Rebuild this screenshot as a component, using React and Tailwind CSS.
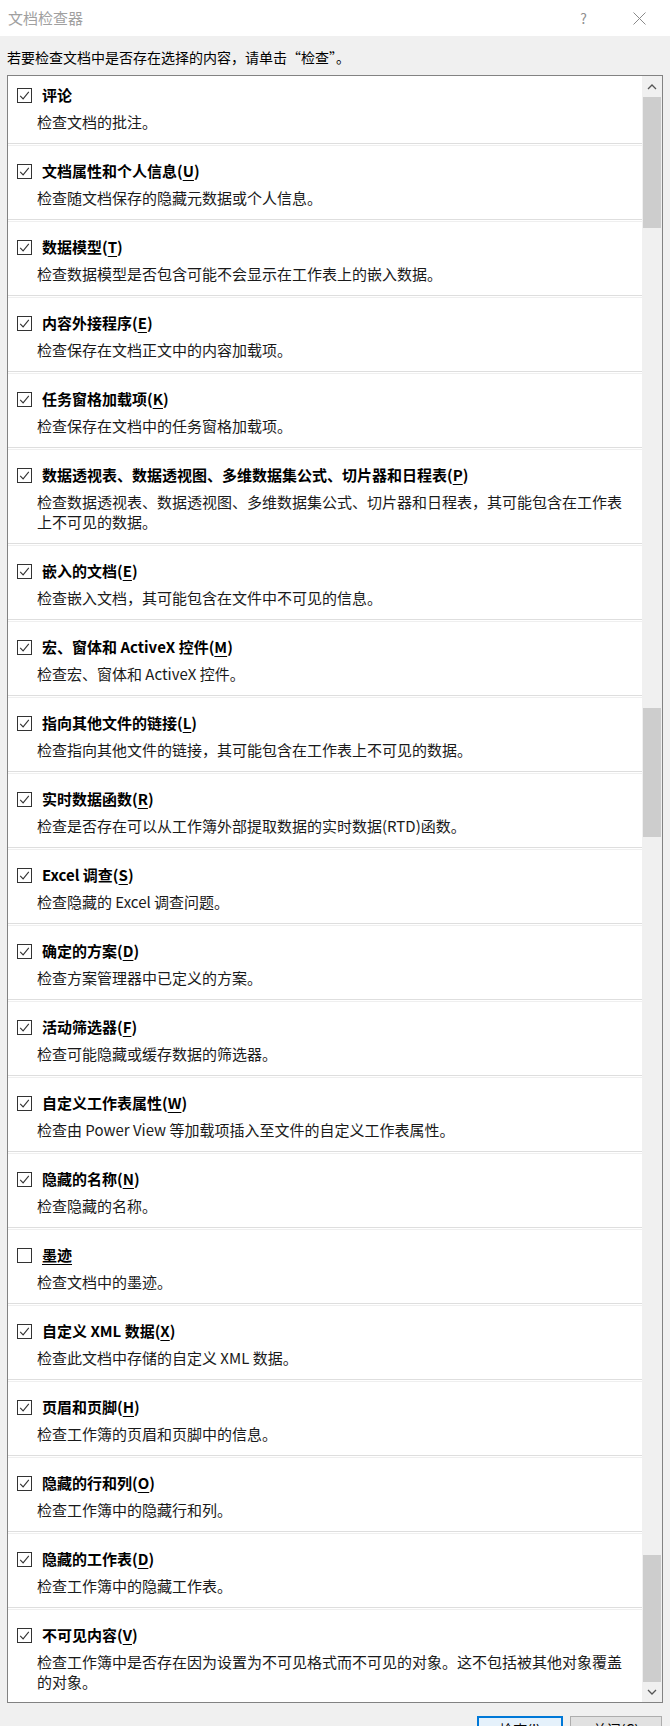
import React from "react"

const items = [
  { title: "评论", desc: "检查文档的批注。" },
  { title: "文档属性和个人信息", key: "U", desc: "检查随文档保存的隐藏元数据或个人信息。" },
  { title: "数据模型", key: "T", desc: "检查数据模型是否包含可能不会显示在工作表上的嵌入数据。" },
  { title: "内容外接程序", key: "E", desc: "检查保存在文档正文中的内容加载项。" },
  { title: "任务窗格加载项", key: "K", desc: "检查保存在文档中的任务窗格加载项。" },
  { title: "数据透视表、数据透视图、多维数据集公式、切片器和日程表", key: "P", desc: "检查数据透视表、数据透视图、多维数据集公式、切片器和日程表，其可能包含在工作表上不可见的数据。" },
  { title: "嵌入的文档", key: "E", desc: "检查嵌入文档，其可能包含在文件中不可见的信息。" },
  { title: "宏、窗体和 ActiveX 控件", key: "M", desc: "检查宏、窗体和 ActiveX 控件。" },
  { title: "指向其他文件的链接", key: "L", desc: "检查指向其他文件的链接，其可能包含在工作表上不可见的数据。" },
  { title: "实时数据函数", key: "R", desc: "检查是否存在可以从工作簿外部提取数据的实时数据(RTD)函数。" },
  { title: "Excel 调查", key: "S", desc: "检查隐藏的 Excel 调查问题。" },
  { title: "确定的方案", key: "D", desc: "检查方案管理器中已定义的方案。" },
  { title: "活动筛选器", key: "F", desc: "检查可能隐藏或缓存数据的筛选器。" },
  { title: "自定义工作表属性", key: "W", desc: "检查由 Power View 等加载项插入至文件的自定义工作表属性。" },
  { title: "隐藏的名称", key: "N", desc: "检查隐藏的名称。" },
  { title: "墨迹", unchecked: true, underline: true, desc: "检查文档中的墨迹。" },
  { title: "自定义 XML 数据", key: "X", desc: "检查此文档中存储的自定义 XML 数据。" },
  { title: "页眉和页脚", key: "H", desc: "检查工作簿的页眉和页脚中的信息。" },
  { title: "隐藏的行和列", key: "O", desc: "检查工作簿中的隐藏行和列。" },
  { title: "隐藏的工作表", key: "D", desc: "检查工作簿中的隐藏工作表。" },
  { title: "不可见内容", key: "V", desc: "检查工作簿中是否存在因为设置为不可见格式而不可见的对象。这不包括被其他对象覆盖的对象。" },
]

function CheckBox({ checked }) {
  return (
    <svg width="15" height="15" viewBox="0 0 15 15" className="flex-shrink-0">
      <rect x="0.5" y="0.5" width="14" height="14" fill="#fff" stroke="#333" />
      {checked && <path d="M3.2 7.8 L6.1 10.9 L11.8 3.8" fill="none" stroke="#333" strokeWidth="1.1" />}
    </svg>
  )
}

function Row({ item, first, last }) {
  return (
    <div>
      <div className={`${first ? "pt-[8px]" : "pt-[14px]"} ${last ? "pb-[10px]" : "pb-[11px]"}`}>
        <div className="flex items-center h-[22px] pl-[9px] gap-[10px]">
          <CheckBox checked={!item.unchecked} />
          <span className={`text-[15px] font-bold text-black leading-[22px] whitespace-nowrap ${item.underline ? "underline underline-offset-[3px]" : ""}`}>
            {item.title}
            {item.key && (
              <>
                (<span className="underline underline-offset-[3px]">{item.key}</span>)
              </>
            )}
          </span>
        </div>
        <p className="mt-[6px] pl-[29px] max-w-[622px] text-[15px] leading-[20px] text-[#1a1a1a]">
          {item.desc}
        </p>
      </div>
      {!last && (
        <div>
          <div className="h-[1px] bg-[#dedede]" />
          <div className="h-[1px] bg-white" />
          <div className="h-[1px] bg-[#efefef]" />
        </div>
      )}
    </div>
  )
}

function ScrollBar() {
  return (
    <div className="w-[20px] flex-shrink-0 flex flex-col bg-[#f0f0f0]">
      <div className="h-[21px] flex items-center justify-center">
        <svg width="10" height="6" viewBox="0 0 10 6">
          <path d="M1 5 L5 1 L9 5" fill="none" stroke="#555" strokeWidth="1.3" />
        </svg>
      </div>
      <div className="h-[131px] mx-[1px] bg-[#cdcdcd]" />
      <div className="h-[480px]" />
      <div className="h-[129px] mx-[1px] bg-[#cdcdcd]" />
      <div className="h-[718px]" />
      <div className="flex-1 mx-[1px] bg-[#cdcdcd]" />
      <div className="h-[20px] flex items-center justify-center">
        <svg width="10" height="6" viewBox="0 0 10 6">
          <path d="M1 1 L5 5 L9 1" fill="none" stroke="#555" strokeWidth="1.3" />
        </svg>
      </div>
    </div>
  )
}

export default function App() {
  return (
    <div
      className="w-[670px] h-[1726px] overflow-hidden bg-[#f0f0f0] text-black"
      style={{ fontFamily: '"Noto Sans CJK SC", "Noto Sans", sans-serif' }}
    >
      {/* Title bar */}
      <div className="h-[36px] bg-white flex items-center justify-between pl-[8px] pr-[24px]">
        <span className="text-[15px] text-[#a0a0a0]">文档检查器</span>
        <div className="flex items-center gap-[46px]">
          <span className="text-[14px] text-[#909090]">?</span>
          <svg width="13" height="13" viewBox="0 0 13 13">
            <path d="M0.5 0.5 L12.5 12.5 M12.5 0.5 L0.5 12.5" stroke="#8a8a8a" strokeWidth="1" />
          </svg>
        </div>
      </div>

      <div className="h-[39px] flex items-center pt-[3px] pl-[7px] text-[14px] text-black">
        若要检查文档中是否存在选择的内容，请单击“检查”。
      </div>

      {/* List box */}
      <div className="ml-[7px] w-[656px] border border-[#828282] bg-white flex">
        <div className="flex-1 min-w-0">
          {items.map((item, i) => (
            <Row key={i} item={item} first={i === 0} last={i === items.length - 1} />
          ))}
        </div>
        <ScrollBar />
      </div>

      {/* Buttons, mostly below the window edge */}
      <div className="mt-[13px] flex justify-end gap-[7px] pr-[8px]">
        <button className="w-[86px] h-[26px] border-2 border-[#0078d7] bg-[#e5f1fb] text-[14px]">
          检查(<span className="underline">I</span>)
        </button>
        <button className="w-[92px] h-[26px] border border-[#adadad] bg-[#e1e1e1] text-[14px]">
          关闭(<span className="underline">C</span>)
        </button>
      </div>
    </div>
  )
}
